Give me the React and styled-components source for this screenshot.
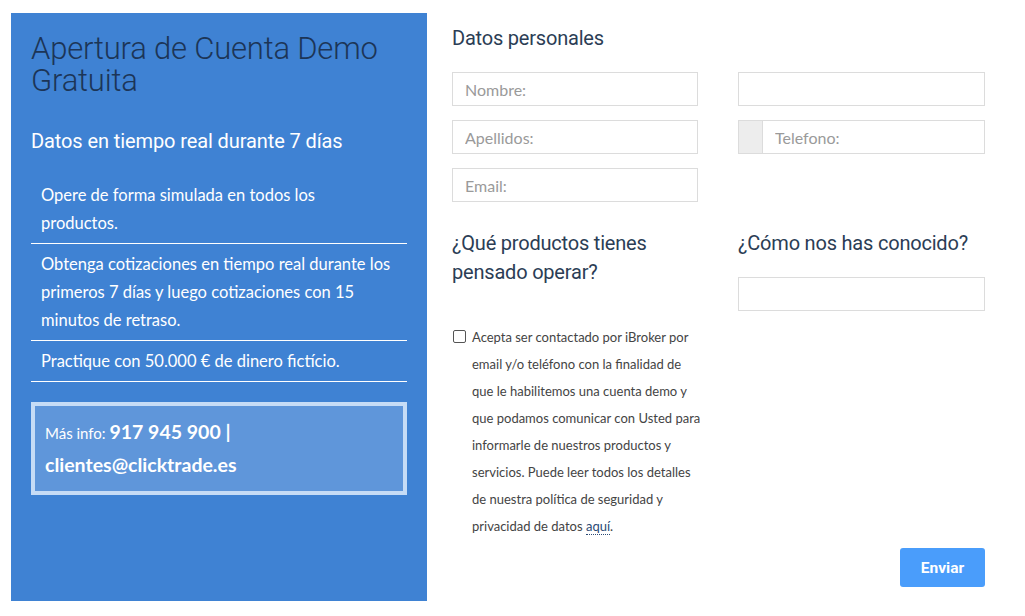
import React from "react";
import styled, { createGlobalStyle } from "styled-components";

const GlobalStyle = createGlobalStyle`
  html, body {
    margin: 0;
    padding: 0;
    background: #fff;
  }
  body {
    font-family: Lato, "Open Sans", sans-serif;
  }
  * { box-sizing: border-box; }
`;

const Page = styled.div`
  display: flex;
  padding: 13px 40px 15px 11px;
  width: 1025px;
  height: 616px;
`;

const Panel = styled.aside`
  width: 416px;
  height: 588px;
  background: #3f82d3;
  padding: 20px 20px 0 20px;
  display: flex;
  flex-direction: column;
`;

const Title = styled.h1`
  margin: 0;
  font-family: Roboto, "Open Sans", sans-serif;
  font-weight: 300;
  font-size: 31px;
  line-height: 32px;
  color: #1c3557;
  letter-spacing: -0.2px;
`;

const Subtitle = styled.h2`
  margin: 30px 0 0 0;
  font-family: Roboto, "Open Sans", sans-serif;
  font-weight: 400;
  font-size: 20px;
  line-height: 28px;
  color: #fff;
  letter-spacing: -0.1px;
`;

const List = styled.ul`
  list-style: none;
  margin: 24px 0 0 0;
  padding: 0;
`;

const Item = styled.li`
  color: #fff;
  font-size: 16.5px;
  line-height: 28px;
  padding: 2px 10px 6px 10px;
  border-bottom: 1px solid #fff;
  & + & {
    padding-top: 6px;
  }
`;

const InfoBox = styled.div`
  margin-top: 20px;
  background: #5f96da;
  border: 4px solid #c6dcf6;
  padding: 10px 10px 9px 10px;
  color: #fff;
  line-height: 32px;
`;

const Small = styled.span`
  font-size: 15px;
`;

const Strong = styled.strong`
  font-size: 19.5px;
  font-weight: 700;
`;

const Form = styled.form`
  flex: 1;
  padding-left: 25px;
  display: flex;
  flex-direction: column;
`;

const SectionTitle = styled.h3`
  margin: 11px 0 0 0;
  font-family: Roboto, "Open Sans", sans-serif;
  font-weight: 400;
  font-size: 20px;
  line-height: 28px;
  color: #2b3d55;
  letter-spacing: -0.2px;
`;

const Grid = styled.div`
  display: grid;
  grid-template-columns: 246px 247px;
  column-gap: 40px;
  row-gap: 14px;
  margin-top: ${(p) => p.top || 0}px;
`;

const Input = styled.input`
  width: 100%;
  height: 34px;
  border: 1px solid #dcdcdc;
  padding: 0 12px;
  font-family: Lato, sans-serif;
  font-size: 16px;
  color: #555;
  outline: none;
  &::placeholder {
    color: #9a9a9a;
  }
`;

const PhoneGroup = styled.div`
  display: flex;
  height: 34px;
  border: 1px solid #dcdcdc;
`;

const Prefix = styled.span`
  width: 24px;
  background: #ededed;
  border-right: 1px solid #dcdcdc;
`;

const PhoneInput = styled(Input)`
  border: none;
  height: 32px;
  flex: 1;
`;

const Column = styled.div`
  display: flex;
  flex-direction: column;
`;

const Question = styled(SectionTitle)`
  margin: 0;
  line-height: 29px;
`;

const AnswerInput = styled(Input)`
  margin-top: 19px;
`;

const Consent = styled.label`
  display: flex;
  gap: 6px;
  margin-top: 37px;
  font-size: 13px;
  line-height: 27px;
  color: #444;
  width: 252px;
`;

const Box = styled.span`
  flex: none;
  width: 13px;
  height: 13px;
  border: 1px solid #555;
  border-radius: 2px;
  margin: 6px 0 0 1px;
`;

const Link = styled.a`
  color: #2b4a75;
  text-decoration: none;
  border-bottom: 1px dotted #2b4a75;
`;

const Footer = styled.div`
  display: flex;
  justify-content: flex-end;
  margin-top: 8px;
`;

const Button = styled.button`
  width: 85px;
  height: 39px;
  border: none;
  border-radius: 3px;
  background: #4a9dfb;
  color: #fff;
  font-family: Roboto, "Open Sans", sans-serif;
  font-weight: 700;
  font-size: 15.5px;
`;

export default function App() {
  return (
    <>
      <GlobalStyle />
      <Page>
        <Panel>
          <Title>Apertura de Cuenta Demo Gratuita</Title>
          <Subtitle>Datos en tiempo real durante 7 días</Subtitle>
          <List>
            <Item>
              Opere de forma simulada en todos los
              <br />
              productos.
            </Item>
            <Item>
              Obtenga cotizaciones en tiempo real durante los primeros 7 días y luego
              cotizaciones con 15 minutos de retraso.
            </Item>
            <Item>Practique con 50.000 € de dinero fictício.</Item>
          </List>
          <InfoBox>
            <Small>Más info: </Small>
            <Strong>
              917 945 900 |
              <br />
              clientes@clicktrade.es
            </Strong>
          </InfoBox>
        </Panel>
        <Form onSubmit={(e) => e.preventDefault()}>
          <SectionTitle>Datos personales</SectionTitle>
          <Grid top={20}>
            <Input placeholder="Nombre:" />
            <Input />
            <Input placeholder="Apellidos:" />
            <PhoneGroup>
              <Prefix />
              <PhoneInput placeholder="Telefono:" />
            </PhoneGroup>
            <Input placeholder="Email:" />
          </Grid>
          <Grid top={27}>
            <Column>
              <Question>¿Qué productos tienes pensado operar?</Question>
              <Consent>
                <Box />
                <span>
                  Acepta ser contactado por iBroker por email y/o teléfono con la
                  finalidad de que le habilitemos una cuenta demo y que podamos
                  comunicar con Usted para informarle de nuestros productos y
                  servicios. Puede leer todos los detalles de nuestra política de
                  seguridad y privacidad de datos <Link href="#">aquí</Link>.
                </span>
              </Consent>
            </Column>
            <Column>
              <Question>¿Cómo nos has conocido?</Question>
              <AnswerInput />
            </Column>
          </Grid>
          <Footer>
            <Button type="submit">Enviar</Button>
          </Footer>
        </Form>
      </Page>
    </>
  );
}
